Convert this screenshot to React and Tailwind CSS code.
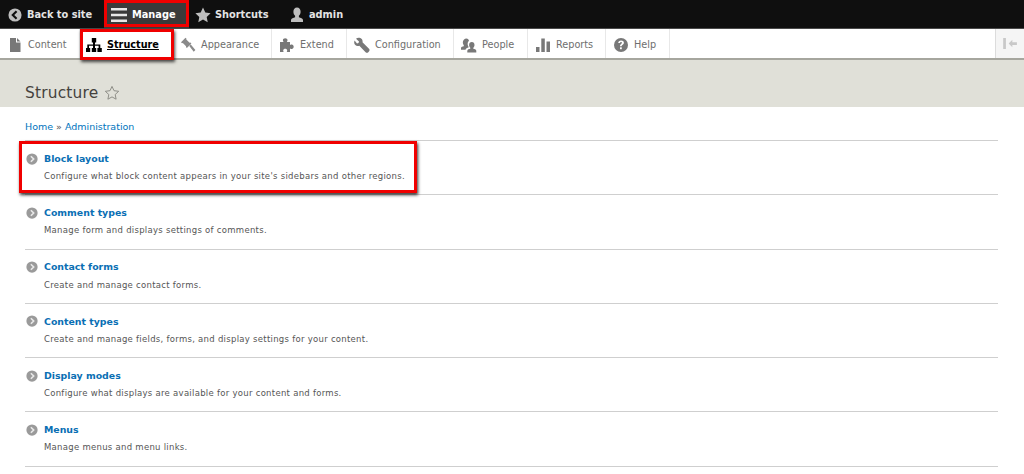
import React from "react";

const Chevron = ({ className }) => (
  <svg viewBox="0 0 16 16" className={className} fill="none">
    <circle cx="8" cy="8" r="7.500" fill="#9a9a9a" />
    <path d="M6.500 4.300 10.200 8l-3.700 3.700" stroke="#e8e8e8" strokeWidth="2.200" />
  </svg>
);

const icons = {
  back: (
    <svg viewBox="0 0 16 16" className="w-[14px] h-[14px]">
      <circle cx="8" cy="8" r="7.500" fill="#bebebe" />
      <path d="M9.800 3.600 5.400 8l4.400 4.400" stroke="#0f0f0f" strokeWidth="2.400" fill="none" />
    </svg>
  ),
  burger: (
    <svg viewBox="0 0 16 16" className="w-[16px] h-[16px]">
      <path d="M0 1h16v2.600H0zM0 6.700h16v2.600H0zM0 12.400h16V15H0z" fill="#e8e8e8" />
    </svg>
  ),
  star: (
    <svg viewBox="0 0 16 16" className="w-[16px] h-[16px]">
      <path d="M8 .6l2.300 4.900 5.300.7-3.900 3.700 1 5.300L8 12.600l-4.700 2.600 1-5.300L.4 6.200l5.300-.7z" fill="#bebebe" />
    </svg>
  ),
  user: (
    <svg viewBox="0 0 16 16" className="w-[16px] h-[16px]">
      <path d="M8 .5c2.200 0 3.600 1.800 3.600 4.200 0 1.800-.8 3.300-1.700 4.100v1.400c1.600.5 4.100 1.200 4.100 2.800V15H2v-2c0-1.600 2.500-2.300 4.100-2.800V8.800C5.200 8 4.400 6.500 4.400 4.700 4.400 2.300 5.800.5 8 .5z" fill="#bebebe" />
    </svg>
  ),
  content: (
    <svg viewBox="0 0 16 16" className="w-[16px] h-[16px]">
      <path d="M3 1h6v4.500h4.500V15H3zM10 1l3.500 3.500H10z" fill="#787878" />
    </svg>
  ),
  structure: (
    <svg viewBox="0 0 16 16" className="w-[16px] h-[16px]">
      <path d="M5.800 1h4.400v4.400H9v2h5.300V11h1.500v4h-4.400v-4h1.200V8.800H9V11h1.200v4H5.800v-4H7V8.800H3V11h1.200v4H-.2v-4h1.500V7.400H7v-2H5.800z" fill="#000" />
    </svg>
  ),
  appearance: (
    <svg viewBox="0 0 16 16" className="w-[16px] h-[16px]">
      <path d="M5.500.8 1 5.300l1 1 .8-.3 3.300 3.300-.2.800 1 1 4.500-4.500-1-1-.8.2L6.300 2.500l.2-.7zM9.300 9l1.500-1.500 4.600 5.600-1.700 1.700z" fill="#8a8a8a" />
    </svg>
  ),
  extend: (
    <svg viewBox="0 0 16 16" className="w-[16px] h-[16px]">
      <path d="M1 5h3.600c-.5-.8-.7-1.300-.7-1.800C3.900 2 5 1.300 6.200 1.300S8.500 2 8.500 3.200c0 .5-.2 1-.7 1.800H11v3.100c.8-.5 1.300-.6 1.800-.6 1.100 0 1.900 1.100 1.900 2.300s-.8 2.300-1.900 2.300c-.5 0-1-.2-1.800-.7V15H7.700c.4-.8.5-1.200.5-1.600 0-1-1-1.600-2-1.600s-2 .6-2 1.600c0 .4.100.8.500 1.600H1z" fill="#787878" />
    </svg>
  ),
  config: (
    <svg viewBox="0 0 16 16" className="w-[16px] h-[16px]">
      <path d="M5.500.8c-1.300-.2-2.500.1-3.500 1L5 4.500 4.500 6 3 6.500.6 3.600C-.2 5.300.2 7 1.300 8c1 1 2.500 1.200 4 .7l6.300 6.500c.7.7 1.900.7 2.700 0l.8-.9c.6-.7.6-1.800-.1-2.500L8.500 5.300C9 3.200 7.700 1.200 5.500.8z" fill="#787878" />
    </svg>
  ),
  people: (
    <svg viewBox="0 0 16 16" className="w-[16px] h-[16px]">
      <path d="M10.800 5c1.700 0 2.700 1.300 2.700 3 0 1.200-.5 2.200-1.200 2.800v1c1.100.3 3 .7 3 1.900V15.500H6.300v-1.800c0-1.200 1.900-1.600 3-1.900v-1C8.600 10.200 8.100 9.200 8.100 8c0-1.700 1-3 2.700-3zM5.500 1.500c1.400 0 2.300 1 2.500 2.300-1 .7-1.500 2.200-1.300 3.900.1.800.4 1.500.8 2v.8c-1.300.4-2.800 1-3 2.300H0v-1.700c0-1.100 1.700-1.500 2.800-1.800v-1C2.200 7.600 1.800 6.600 1.800 5.500c0-2.200 1.600-4 3.700-4z" fill="#787878" />
    </svg>
  ),
  reports: (
    <svg viewBox="0 0 16 16" className="w-[16px] h-[16px]">
      <path d="M1 10h3.500v5H1zM6.300 1.500h3.500V15H6.300zM11.500 4.500H15V15h-3.500z" fill="#787878" />
    </svg>
  ),
  help: (
    <svg viewBox="0 0 16 16" className="w-[16px] h-[16px]">
      <circle cx="8" cy="8" r="7" fill="#787878" />
      <path d="M5.200 6c0-1.700 1.300-2.600 2.900-2.600s2.800.9 2.800 2.300c0 1.200-.7 1.700-1.500 2.300-.5.400-.7.600-.7 1.300H7c0-1.200.3-1.800 1.100-2.400.5-.4.900-.6.900-1.100s-.4-.8-.9-.8c-.7 0-1 .4-1 1z" fill="#fff" />
      <rect x="7" y="10.300" width="1.800" height="1.900" fill="#fff" />
    </svg>
  ),
};

const Top = ({ icon, label, className = "", gap = "gap-[5px]" }) => (
  <a className={`flex items-center h-full pt-[2px] ${gap} text-[9.8px] font-bold text-[#e4e4e4] ${className}`}>
    {icon}
    <span className="pt-[1px]">{label}</span>
  </a>
);

const Tab = ({ icon, label, width, active }) => (
  <a
    style={{ width }}
    className={`flex items-center h-full pt-[2px] gap-[5px] text-[9.7px] border-r border-[#e8e8e8] shrink-0 ${
      active ? "pl-[6px] font-bold text-black underline" : "pl-[7px] text-[#6e6e6e]"
    }`}
  >
    {icon}
    <span className="pt-[1px]">{label}</span>
  </a>
);

const rows = [
  ["Block layout", "Configure what block content appears in your site's sidebars and other regions."],
  ["Comment types", "Manage form and displays settings of comments."],
  ["Contact forms", "Create and manage contact forms."],
  ["Content types", "Create and manage fields, forms, and display settings for your content."],
  ["Display modes", "Configure what displays are available for your content and forms."],
  ["Menus", "Manage menus and menu links."],
];

export default function App() {
  return (
    <div className="relative w-[1024px] h-[474px] overflow-hidden bg-white font-['DejaVu_Sans',sans-serif]">
      <div className="flex items-center h-[29px] bg-[#0f0f0f] border-b border-[#4a4a4a]">
        <Top icon={icons.back} label="Back to site" className="pl-[8px] w-[104px]" />
        <Top icon={icons.burger} label="Manage" className="pl-[7px] w-[85px] bg-[#3a3a3a] text-white" />
        <Top icon={icons.star} label="Shortcuts" className="pl-[6px] w-[100px]" gap="gap-[4px]" />
        <Top icon={icons.user} label="admin" gap="gap-[4px]" />
      </div>

      <div className="flex items-stretch h-[31px] bg-white border-b-2 border-[#a6a69e]">
        <Tab icon={icons.content} label="Content" width={80} />
        <Tab icon={icons.structure} label="Structure" width={93} active />
        <Tab icon={icons.appearance} label="Appearance" width={99} />
        <Tab icon={icons.extend} label="Extend" width={75} />
        <Tab icon={icons.config} label="Configuration" width={107} />
        <Tab icon={icons.people} label="People" width={74} />
        <Tab icon={icons.reports} label="Reports" width={78} />
        <Tab icon={icons.help} label="Help" width={64} />
        <div className="flex-1" />
        <div className="flex items-center justify-center w-[29px] bg-[#f5f5f5] border-l border-[#dcdcdc]">
          <svg viewBox="0 0 16 12" className="w-[15px] h-[11px]">
            <path d="M0 0h3v12H0z" fill="#c8c8c8" />
            <path d="M6 6l4-4v2.500h5v3h-5V10z" fill="#c8c8c8" />
          </svg>
        </div>
      </div>

      <div className="flex items-center gap-[6px] h-[47px] pl-[25px] pt-[20px] bg-[#e0e0d8]">
        <h1 className="text-[15.4px] text-[#45423d] tracking-[0.2px]">Structure</h1>
        <svg viewBox="0 0 16 16" className="w-[16px] h-[16px] -mt-[2px]">
          <path d="M8 1.400l2 4.300 4.700.6-3.500 3.200.9 4.700L8 11.900l-4.100 2.300.9-4.700L1.300 6.300 6 5.700z" fill="none" stroke="#8f8f88" strokeWidth="1" />
        </svg>
      </div>

      <div className="pl-[25px] pr-[26px]">
        <div className="flex items-center h-[33px] pt-[8px] text-[9.5px] text-[#0074bd]">
          <span>Home</span>
          <span className="text-[#555] mx-[3px]">»</span>
          <span>Administration</span>
        </div>
        {rows.map(([title, desc]) => (
          <div key={title} className="h-[54.25px] border-t border-[#cfcfcf] flex flex-col last:h-[55.25px] last:border-b">
            <div className="flex items-center h-[19px] mt-[8px] ml-[1px]">
              <Chevron className="w-[12px] h-[12px]" />
              <span className="ml-[6px] text-[9.4px] font-bold text-[#0a6fb4] leading-none">{title}</span>
            </div>
            <div className="pl-[19px] mt-[1px] text-[8.5px] tracking-[0.28px] text-[#555] leading-[14px]">{desc}</div>
          </div>
        ))}
      </div>

      <div className="absolute left-[104px] top-0 w-[85px] h-[27px] border-[3px] border-[#f00000]" />
      <div className="absolute left-[80px] top-[29px] w-[94px] h-[31px] border-[3px] border-[#f00000] shadow-[1px_2px_3px_rgba(0,0,0,0.7)]" />
      <div className="absolute left-[19px] top-[141px] w-[398px] h-[52px] border-[3px] border-[#f00000] shadow-[1px_2px_3px_rgba(0,0,0,0.8)]" />
    </div>
  );
}
